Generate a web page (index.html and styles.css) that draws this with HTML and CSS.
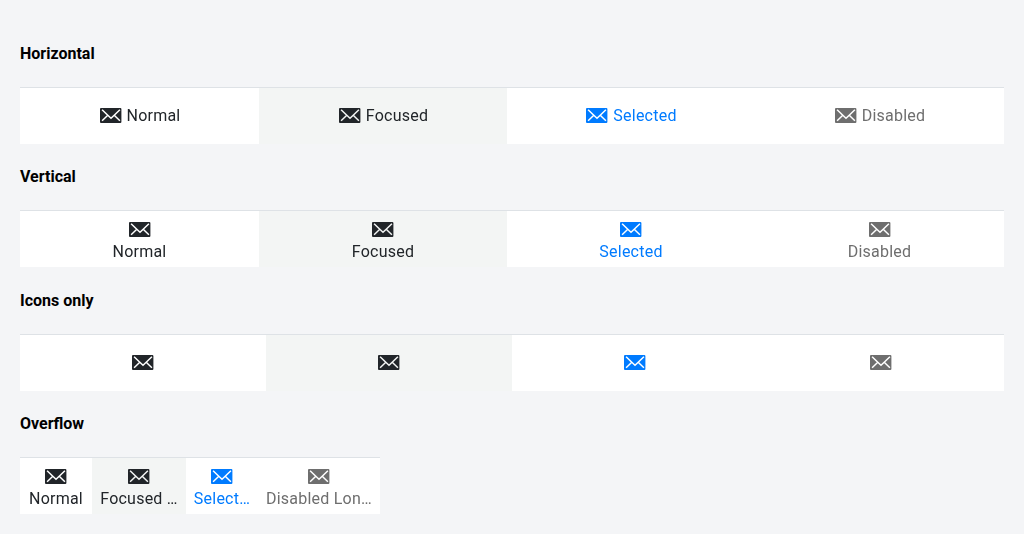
FILE: index.html
```html
<!DOCTYPE html>
<html lang="en">
<head>
<meta charset="utf-8">
<title>Bottom navigation</title>
<link rel="stylesheet" href="styles.css">
</head>
<body>
<svg width="0" height="0" class="defs"><mask id="fold" maskUnits="userSpaceOnUse" x="0" y="0" width="22" height="15"><rect width="22" height="15" fill="#fff"/><path d="M2.1 1.8l5.7 5.5 3.2 3 3.2-3 5.7-5.5M2.1 12.8l5.7-5.5M19.9 12.8l-5.7-5.5" fill="none" stroke="#000" stroke-width="1.5"/></mask><symbol id="mail" viewBox="0 0 22 15"><rect width="21.4" height="15" rx="1" mask="url(#fold)"/></symbol></svg>
<main class="page">
<h4 class="title">Horizontal</h4>
<nav class="bar horizontal">
<a class="item"><svg class="icon"><use href="#mail"/></svg><span class="label">Normal</span></a>
<a class="item focused"><svg class="icon"><use href="#mail"/></svg><span class="label">Focused</span></a>
<a class="item selected"><svg class="icon"><use href="#mail"/></svg><span class="label">Selected</span></a>
<a class="item disabled"><svg class="icon"><use href="#mail"/></svg><span class="label">Disabled</span></a>
</nav>
<h4 class="title">Vertical</h4>
<nav class="bar vertical">
<a class="item"><svg class="icon"><use href="#mail"/></svg><span class="label">Normal</span></a>
<a class="item focused"><svg class="icon"><use href="#mail"/></svg><span class="label">Focused</span></a>
<a class="item selected"><svg class="icon"><use href="#mail"/></svg><span class="label">Selected</span></a>
<a class="item disabled"><svg class="icon"><use href="#mail"/></svg><span class="label">Disabled</span></a>
</nav>
<h4 class="title">Icons only</h4>
<nav class="bar icons">
<a class="item"><svg class="icon"><use href="#mail"/></svg></a>
<a class="item focused"><svg class="icon"><use href="#mail"/></svg></a>
<a class="item selected"><svg class="icon"><use href="#mail"/></svg></a>
<a class="item disabled"><svg class="icon"><use href="#mail"/></svg></a>
</nav>
<h4 class="title">Overflow</h4>
<nav class="bar vertical overflow">
<a class="item"><svg class="icon"><use href="#mail"/></svg><span class="label">Normal</span></a>
<a class="item focused"><svg class="icon"><use href="#mail"/></svg><span class="label">Focused …</span></a>
<a class="item selected"><svg class="icon"><use href="#mail"/></svg><span class="label">Select…</span></a>
<a class="item disabled"><svg class="icon"><use href="#mail"/></svg><span class="label">Disabled Lon…</span></a>
</nav>
</main>
</body>
</html>
```
FILE: styles.css
```css
* { box-sizing: border-box; }
body { margin: 0; background: #f4f5f7; font: 16px/24px Roboto, sans-serif; color: #212529; }
.defs { display: block; }
.page { padding: 20px; }
.title { margin: 0; padding: 22px 0; height: 67px; font-size: 16px; line-height: 23px; font-weight: 700; color: #000; }
.bar { display: grid; height: 57px; margin-bottom: -.6px; grid-template-columns: 239px 248px 248px 249px; background: #fff; border-top: 1px solid #dee2e6; }
.icons { grid-template-columns: repeat(4, 1fr); }
.overflow { width: 360px; grid-template-columns: 72px 94px 72px 122px; }
.item { display: flex; align-items: center; justify-content: center; min-width: 0; }
.horizontal .item { padding-left: 1px; }
.vertical .item { flex-direction: column; padding-top: 4px; }
.icon { width: 22px; height: 15px; fill: currentColor; flex: none; }
.horizontal .icon { margin: 0 5px 1px 0; }
.vertical .icon { margin: 2px 0 5px; }
.label { letter-spacing: .23px; line-height: 20px; white-space: nowrap; will-change: opacity; }
.focused { background: #f3f5f4; }
.selected { color: #007bff; }
.disabled { color: #6e6e6e; }
```
